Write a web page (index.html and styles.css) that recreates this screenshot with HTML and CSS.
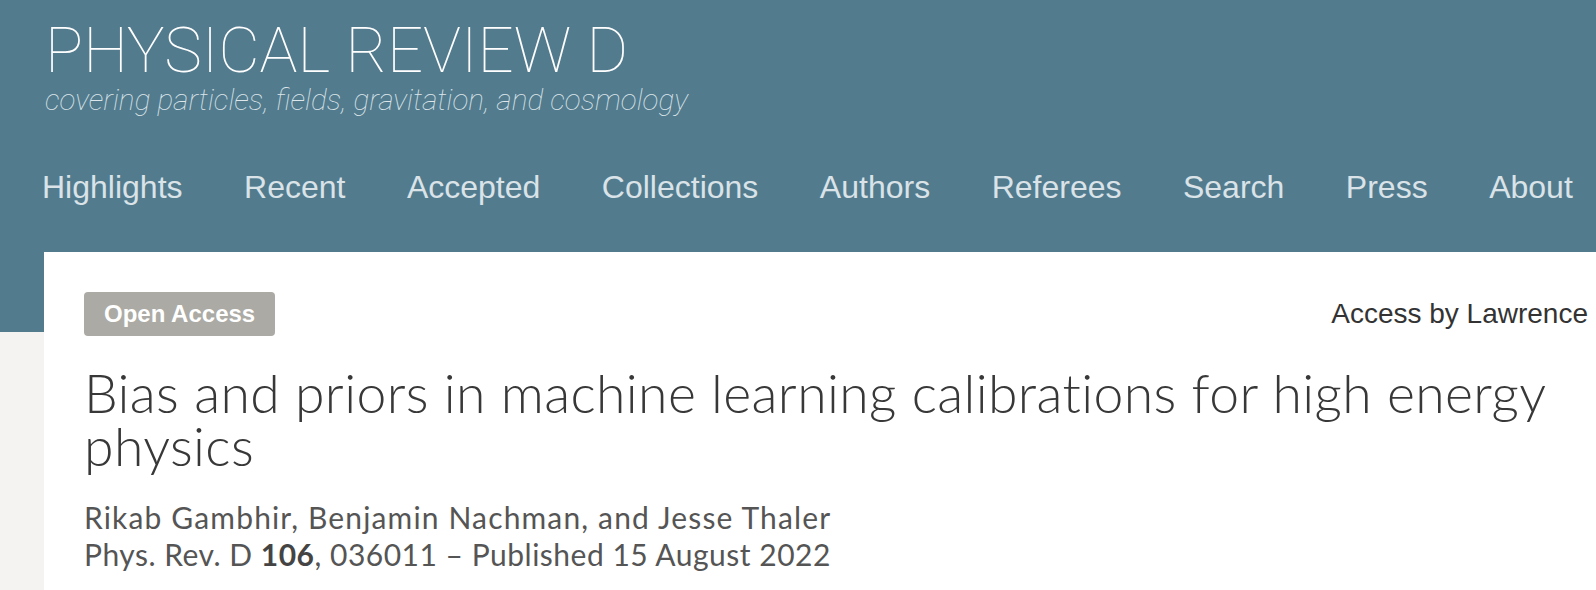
FILE: index.html
```html
<!DOCTYPE html>
<html lang="en">
<head>
<meta charset="utf-8">
<title>Bias and priors in machine learning calibrations for high energy physics</title>
<link rel="stylesheet" href="styles.css">
</head>
<body>
<header class="masthead">
  <div class="brand">
    <div class="journal">PHYSICAL REVIEW D</div>
    <div class="tagline">covering particles, fields, gravitation, and cosmology</div>
  </div>
  <nav class="mainnav">
    <a href="#">Highlights</a>
    <a href="#">Recent</a>
    <a href="#">Accepted</a>
    <a href="#">Collections</a>
    <a href="#">Authors</a>
    <a href="#">Referees</a>
    <a href="#">Search</a>
    <a href="#">Press</a>
    <a href="#">About</a>
  </nav>
</header>
<div class="page">
  <main class="card">
    <div class="toprow">
      <span class="badge">Open Access</span>
      <span class="access">Access by Lawrence</span>
    </div>
    <h1 class="title">Bias and priors in machine learning calibrations for high energy physics</h1>
    <p class="authors">Rikab Gambhir, Benjamin Nachman, and Jesse Thaler</p>
    <p class="cite">Phys. Rev. D <b>106</b>, 036011 – Published 15 August 2022</p>
  </main>
</div>
</body>
</html>
```

FILE: styles.css
```css
html, body {
  margin: 0;
  padding: 0;
}
body {
  background: #f4f3f1;
  overflow: hidden;
}
.masthead {
  background: #537b8e;
  height: 252px;
  box-sizing: border-box;
  padding: 18px 0 0 45px;
  color: #fff;
}
.journal {
  font-family: Roboto, "Liberation Sans", sans-serif;
  font-weight: 100;
  font-size: 63.5px;
  line-height: 66px;
}
.tagline {
  font-family: Roboto, "Liberation Sans", sans-serif;
  font-weight: 100;
  font-style: italic;
  font-size: 29.7px;
  line-height: 30px;
  color: #dde6eb;
  margin-top: 1px;
}
.mainnav {
  display: flex;
  gap: 61.5px;
  margin-top: 52px;
  margin-left: -3px;
}
.mainnav a {
  font-family: "Liberation Sans", Arial, sans-serif;
  font-size: 32px;
  line-height: 40px;
  color: #dae3e8;
  text-decoration: none;
}
.page {
  padding-left: 44px;
  background: linear-gradient(#537b8e 0 80px, #f4f3f1 80px);
  height: 338px;
}
.card {
  background: #fff;
  height: 100%;
  box-sizing: border-box;
  padding: 40px 8px 0 40px;
  color: #333;
  font-family: Lato, "Open Sans", sans-serif;
  font-variant-ligatures: none;
}
.toprow {
  display: flex;
  justify-content: space-between;
  align-items: center;
}
.badge {
  background: #abaaa4;
  color: #fff;
  font-family: "Liberation Sans", Arial, sans-serif;
  font-weight: 700;
  font-size: 24px;
  line-height: 44px;
  padding: 0 20px;
  border-radius: 4px;
}
.access {
  font-family: "Liberation Sans", Arial, sans-serif;
  font-size: 28px;
  color: #333;
}
.title {
  margin: 30px 0 0;
  font-weight: 300;
  font-size: 53.5px;
  letter-spacing: 0.38px;
  line-height: 53px;
  color: #383838;
}
.authors, .cite {
  margin: 0;
  font-size: 30px;
  line-height: 37px;
  color: #555;
}
.authors {
  margin-top: 27px;
  letter-spacing: 1.15px;
}
.cite {
  letter-spacing: 0.5px;
}
.cite b {
  font-weight: 700;
  color: #444;
}
```
